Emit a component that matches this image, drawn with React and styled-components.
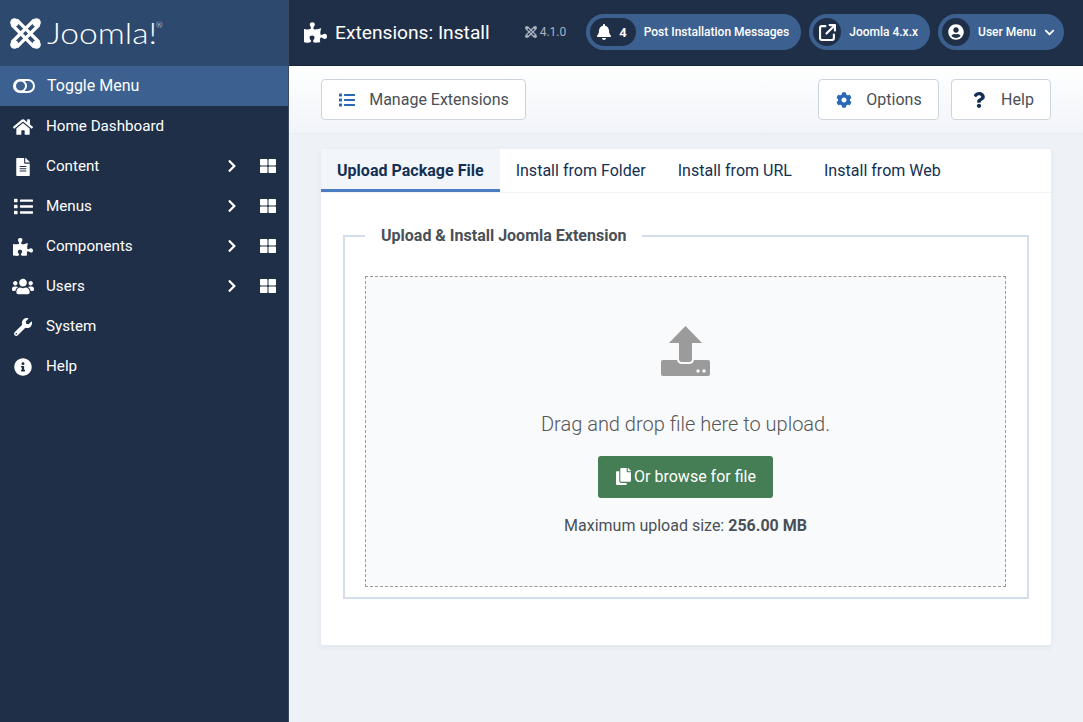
import React from "react";
import styled, { createGlobalStyle } from "styled-components";
import {
  FaPuzzlePiece,
  FaHome,
  FaFileAlt,
  FaList,
  FaUsers,
  FaWrench,
  FaInfoCircle,
  FaThLarge,
  FaChevronRight,
  FaBell,
  FaUserCircle,
  FaChevronDown,
  FaCog,
  FaQuestion,
  FaCopy,
} from "react-icons/fa";
import { FaArrowUpRightFromSquare } from "react-icons/fa6";

const GlobalStyle = createGlobalStyle`
  html, body {
    margin: 0;
    height: 100%;
    background: #eef2f7;
    font-family: Roboto, "Liberation Sans", sans-serif;
    overflow: hidden;
  }
  * { box-sizing: border-box; }
`;

const Page = styled.div`
  display: flex;
  width: 1083px;
  height: 722px;
`;

const Sidebar = styled.aside`
  width: 289px;
  flex-shrink: 0;
  background: #1f2f47;
  border-right: 1px solid #3a4a60;
  color: #fff;
`;

const Brand = styled.div`
  height: 66px;
  background: #2e496e;
  display: flex;
  align-items: center;
  padding-left: 10px;
  gap: 6px;
`;

const BrandName = styled.span`
  display: inline-block;
  font-family: Lato, sans-serif;
  font-weight: 300;
  font-size: 30px;
  white-space: nowrap;
  transform: scaleX(1.12);
  transform-origin: left center;
  position: relative;
  top: -1px;
  sup {
    font-size: 7px;
    vertical-align: 16px;
    line-height: 0;
    margin-left: -1px;
  }
`;

const NavItem = styled.div`
  height: 40px;
  display: flex;
  align-items: center;
  font-size: ${(p) => (p.$active ? "16px" : "15.2px")};
  padding: ${(p) => (p.$active ? "0 0 2px 13px" : "0 0 1px 12px")};
  background: ${(p) => (p.$active ? "#3c6190" : "transparent")};
`;

const NavIcon = styled.span`
  width: 22px;
  margin-right: 12px;
  display: flex;
  justify-content: center;
  font-size: ${(p) => p.$size || 18}px;
  position: relative;
  top: 1px;
`;

const NavLabel = styled.span`
  flex: 1;
`;

const NavChevron = styled.span`
  display: flex;
  font-size: 14px;
  margin-right: 21px;
`;

const NavGrid = styled.span`
  display: flex;
  font-size: 16px;
  margin-right: 12px;
`;

const Main = styled.main`
  flex: 1;
  min-width: 0;
  display: flex;
  flex-direction: column;
`;

const Header = styled.header`
  height: 66px;
  background: #1f2f47;
  border-bottom: 1px solid #16233a;
  display: flex;
  align-items: center;
  padding: 0 19px 1px 15px;
  color: #fff;
  white-space: nowrap;
`;

const PageTitle = styled.h1`
  margin: 0;
  font-size: 19.2px;
  font-weight: 400;
  display: flex;
  align-items: center;
  gap: 8px;
  svg { font-size: 23px; }
`;

const Version = styled.span`
  margin-left: 35px;
  display: flex;
  align-items: center;
  gap: 3px;
  font-size: 12px;
  color: #aab3c0;
`;

const HeaderPills = styled.div`
  margin-left: auto;
  display: flex;
  gap: 8px;
`;

const Pill = styled.div`
  height: 36px;
  border-radius: 18px;
  background: #3c6190;
  display: flex;
  align-items: center;
  padding: 0 ${(p) => p.$pad || 12}px 0 4px;
  font-size: 12px;
  font-weight: 500;
`;

const PillBadge = styled.span`
  height: 28px;
  min-width: 28px;
  border-radius: 14px;
  background: #1f2f47;
  display: flex;
  align-items: center;
  justify-content: center;
  gap: 7px;
  padding: ${(p) => (p.$wide ? "0 9px 0 6px" : "0")};
  font-size: 13px;
  font-weight: 700;
  margin-right: 8px;
  svg { font-size: ${(p) => p.$icon || 16}px; }
`;

const ChevronGap = styled.span`
  display: flex;
  margin-left: 8px;
  font-size: 11px;
`;

const Toolbar = styled.div`
  height: 68px;
  background: linear-gradient(180deg, #fff, #f1f4f9);
  display: flex;
  align-items: center;
  gap: 12px;
  padding: 0 32px;
  border-bottom: 1px solid #e8edf4;
`;

const ToolButton = styled.button`
  height: 41px;
  width: ${(p) => p.$w}px;
  margin-left: ${(p) => (p.$push ? "auto" : "0")};
  padding: 0 0 0 ${(p) => p.$shift || 1}px;
  background: #fff;
  border: 1px solid #cdd4de;
  border-radius: 4px;
  display: flex;
  align-items: center;
  justify-content: center;
  gap: 14px;
  font-family: inherit;
  font-size: 16px;
  color: #495057;
  svg {
    font-size: 16px;
    color: ${(p) => p.$iconColor || "#2a69b8"};
  }
`;

const Content = styled.div`
  padding: 15px 32px 0;
`;

const Card = styled.section`
  background: #fff;
  height: 496px;
  border-radius: 2px;
  box-shadow: 0 2px 6px rgba(40, 60, 90, 0.08);
`;

const Tabs = styled.nav`
  height: 44px;
  display: flex;
  border-bottom: 1px solid #eff2f7;
`;

const Tab = styled.div`
  height: 43px;
  display: flex;
  align-items: center;
  padding: 0 16px;
  font-size: 16px;
  letter-spacing: 0.02px;
  color: #132f53;
  font-weight: ${(p) => (p.$active ? 700 : 400)};
  background: ${(p) => (p.$active ? "#f2f6fa" : "transparent")};
  box-shadow: ${(p) => (p.$active ? "inset 0 -3px 0 #4a7cc0" : "none")};
`;

const Panel = styled.div`
  padding: 33px 22px 0;
`;

const Fieldset = styled.fieldset`
  margin: 0;
  height: 373px;
  padding: 31px 21px 0 20px;
  border: 2px solid #d3deeb;
`;

const Legend = styled.legend`
  margin-left: 0;
  padding: 0 16px;
  font-size: 16px;
  font-weight: 700;
  color: #495057;
`;

const DropZone = styled.div`
  height: 311px;
  background: #f9fafc;
  border: 1px dashed #9a9a9a;
  display: flex;
  flex-direction: column;
  align-items: center;
  padding-top: 49px;
  color: #495057;
`;

const DropText = styled.p`
  margin: 36px 0 0;
  font-size: 20px;
  font-weight: 300;
  color: #555;
`;

const BrowseButton = styled.button`
  margin-top: 20px;
  width: 175px;
  height: 42px;
  background: #457d54;
  border: 0;
  border-radius: 3px;
  color: #fff;
  font-family: inherit;
  font-size: 16px;
  padding-bottom: 2px;
  display: flex;
  align-items: center;
  justify-content: center;
  gap: 2px;
  svg { font-size: 17px; }
`;

const SizeNote = styled.p`
  margin: 18px 0 0;
  font-size: 16px;
  strong { font-weight: 700; }
`;

const JoomlaMark = ({ size = 31, color = "#fff" }) => (
  <svg width={size} height={size} viewBox="0 0 32 32" fill="none" stroke={color}>
    <g strokeWidth="3.4">
      <path d="M2 7 L25 30" />
      <path d="M7 2 L30 25" />
      <path d="M30 7 L7 30" />
      <path d="M25 2 L2 25" />
    </g>
    <g fill={color} stroke="none">
      <circle cx="4.6" cy="4.6" r="4.4" />
      <circle cx="27.4" cy="4.6" r="4.4" />
      <circle cx="4.6" cy="27.4" r="4.4" />
      <circle cx="27.4" cy="27.4" r="4.4" />
    </g>
  </svg>
);

const ToggleIcon = () => (
  <svg width="22" height="14" viewBox="0 0 22 14" fill="none" stroke="#fff" strokeWidth="2">
    <rect x="1" y="1" width="20" height="12" rx="6" />
    <circle cx="7.5" cy="7" r="5.5" />
  </svg>
);

const UploadIcon = () => (
  <svg width="49" height="50" viewBox="0 0 49 50" fill="#9b9b9b">
    <path d="M24.5 0 L41 17 H31 V33 a3 3 0 0 1 -3 3 H21 a3 3 0 0 1 -3 -3 V17 H8 Z" />
    <path d="M2 34 a2 2 0 0 0 -2 2 V48 a2 2 0 0 0 2 2 H47 a2 2 0 0 0 2 -2 V36 a2 2 0 0 0 -2 -2 H33 a5 5 0 0 1 -5 4 H21 a5 5 0 0 1 -5 -4 Z" />
    <circle cx="37" cy="45" r="1.7" fill="#f9fafc" />
    <circle cx="43" cy="45" r="1.7" fill="#f9fafc" />
  </svg>
);

const navItems = [
  { label: "Home Dashboard", icon: <FaHome />, size: 20 },
  { label: "Content", icon: <FaFileAlt /> },
  { label: "Menus", icon: <FaList />, size: 19, more: true },
  { label: "Components", icon: <FaPuzzlePiece />, size: 20, more: true },
  { label: "Users", icon: <FaUsers />, size: 23, more: true },
  { label: "System", icon: <FaWrench /> },
  { label: "Help", icon: <FaInfoCircle /> },
];
navItems[1].more = true;

const tabs = ["Upload Package File", "Install from Folder", "Install from URL", "Install from Web"];

export default function App() {
  return (
    <Page>
      <GlobalStyle />
      <Sidebar>
        <Brand>
          <JoomlaMark />
          <BrandName>Joomla!<sup>®</sup></BrandName>
        </Brand>
        <NavItem $active>
          <NavIcon><ToggleIcon /></NavIcon>
          <NavLabel>Toggle Menu</NavLabel>
        </NavItem>
        {navItems.map((item) => (
          <NavItem key={item.label}>
            <NavIcon $size={item.size}>{item.icon}</NavIcon>
            <NavLabel>{item.label}</NavLabel>
            {item.more && (
              <>
                <NavChevron><FaChevronRight /></NavChevron>
                <NavGrid><FaThLarge /></NavGrid>
              </>
            )}
          </NavItem>
        ))}
      </Sidebar>
      <Main>
        <Header>
          <PageTitle><FaPuzzlePiece />Extensions: Install</PageTitle>
          <Version><JoomlaMark size={12} color="#aab3c0" />4.1.0</Version>
          <HeaderPills>
            <Pill $pad={12}>
              <PillBadge $wide><FaBell />4</PillBadge>
              Post Installation Messages
            </Pill>
            <Pill $pad={12}>
              <PillBadge $icon={17}><FaArrowUpRightFromSquare /></PillBadge>
              Joomla 4.x.x
            </Pill>
            <Pill $pad={9}>
              <PillBadge><FaUserCircle /></PillBadge>
              User Menu
              <ChevronGap><FaChevronDown /></ChevronGap>
            </Pill>
          </HeaderPills>
        </Header>
        <Toolbar>
          <ToolButton $w={205}><FaList />Manage Extensions</ToolButton>
          <ToolButton $w={121} $push><FaCog />Options</ToolButton>
          <ToolButton $w={100} $shift={3} $iconColor="#132f53"><FaQuestion />Help</ToolButton>
        </Toolbar>
        <Content>
          <Card>
            <Tabs>
              {tabs.map((t, i) => (
                <Tab key={t} $active={i === 0}>{t}</Tab>
              ))}
            </Tabs>
            <Panel>
              <Fieldset>
                <Legend>Upload &amp; Install Joomla Extension</Legend>
                <DropZone>
                  <UploadIcon />
                  <DropText>Drag and drop file here to upload.</DropText>
                  <BrowseButton><FaCopy />Or browse for file</BrowseButton>
                  <SizeNote>Maximum upload size: <strong>256.00 MB</strong></SizeNote>
                </DropZone>
              </Fieldset>
            </Panel>
          </Card>
        </Content>
      </Main>
    </Page>
  );
}
